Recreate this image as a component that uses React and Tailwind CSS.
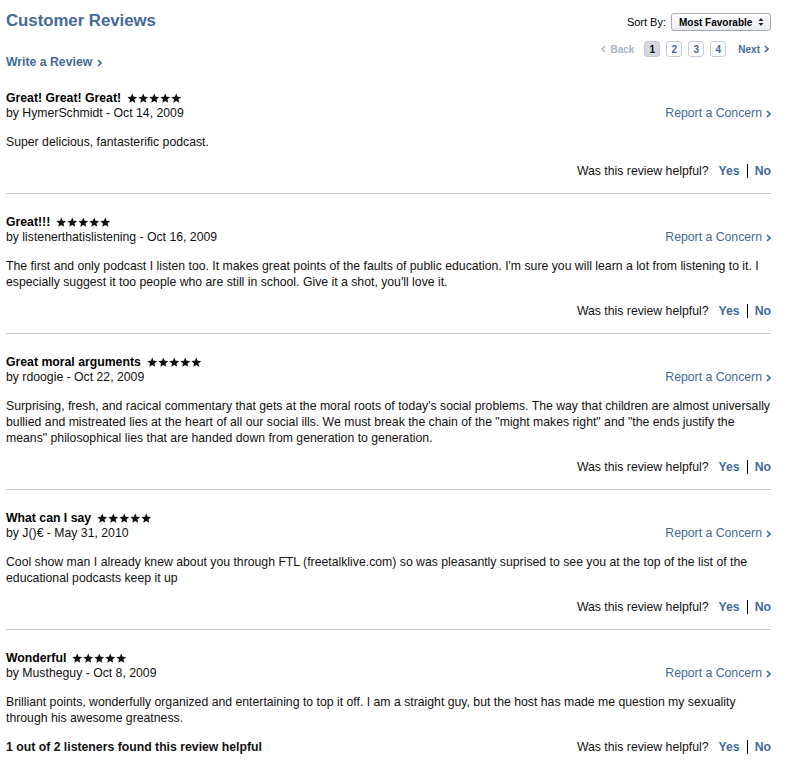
import React from 'react';

const reviews = [
  {
    title: 'Great! Great! Great!',
    by: 'by HymerSchmidt - Oct 14, 2009',
    body: ['Super delicious, fantasterific podcast.'],
  },
  {
    title: 'Great!!!',
    by: 'by listenerthatislistening - Oct 16, 2009',
    body: [
      "The first and only podcast I listen too. It makes great points of the faults of public education. I'm sure you will learn a lot from listening to it. I",
      "especially suggest it too people who are still in school. Give it a shot, you'll love it.",
    ],
  },
  {
    title: 'Great moral arguments',
    by: 'by rdoogie - Oct 22, 2009',
    body: [
      "Surprising, fresh, and racical commentary that gets at the moral roots of today's social problems. The way that children are almost universally",
      'bullied and mistreated lies at the heart of all our social ills. We must break the chain of the "might makes right" and "the ends justify the',
      'means" philosophical lies that are handed down from generation to generation.',
    ],
  },
  {
    title: 'What can I say',
    by: 'by J()€ - May 31, 2010',
    body: [
      'Cool show man I already knew about you through FTL (freetalklive.com) so was pleasantly suprised to see you at the top of the list of the',
      'educational podcasts keep it up',
    ],
  },
  {
    title: 'Wonderful',
    by: 'by Mustheguy - Oct 8, 2009',
    body: [
      'Brilliant points, wonderfully organized and entertaining to top it off. I am a straight guy, but the host has made me question my sexuality',
      'through his awesome greatness.',
    ],
    note: '1 out of 2 listeners found this review helpful',
  },
];

function Chevron({ className }) {
  return (
    <svg width="5" height="8" viewBox="0 0 5 8" className={className}>
      <path d="M1 1 L4 4 L1 7" fill="none" stroke="currentColor" strokeWidth="1.6" />
    </svg>
  );
}

function Stars() {
  return (
    <span className="ml-[6px] inline-flex gap-[0.5px]">
      {[0, 1, 2, 3, 4].map((i) => (
        <svg key={i} width="10.5" height="10.5" viewBox="0 0 24 24">
          <path d="M12 1.2l3.1 7.5 8.1.6-6.2 5.3 1.9 7.9L12 18.3l-6.9 4.2 1.9-7.9L.8 9.3l8.1-.6z" fill="#111" />
        </svg>
      ))}
    </span>
  );
}

function Review({ r, last }) {
  return (
    <div className={last ? '' : 'border-b border-[#c8c8c8] pb-[14px] mb-[21px]'}>
      <div className="flex items-center h-[15px] font-bold text-black">
        {r.title}
        <Stars />
      </div>
      <div className="flex justify-between items-center h-[15px]">
        <span>{r.by}</span>
        <a href="#" className="flex items-center gap-[4px] text-[#44699a]">
          Report a Concern <Chevron />
        </a>
      </div>
      <div className="mt-[13px] leading-[16px]">
        {r.body.map((l, i) => (
          <div key={i} className="whitespace-nowrap">{l}</div>
        ))}
      </div>
      <div className="mt-[13px] flex justify-between items-center h-[16px]">
        <span className="font-bold">{r.note}</span>
        <div className="flex items-center">
          <span>Was this review helpful?</span>
          <a href="#" className="ml-[10px] font-bold text-[#44699a]">Yes</a>
          <span className="mx-[7px] w-px h-[14px] bg-black" />
          <a href="#" className="font-bold text-[#44699a]">No</a>
        </div>
      </div>
    </div>
  );
}

export default function App() {
  return (
    <div
      className="w-[785px] h-[763px] bg-white text-[12.25px] text-[#111] pl-[6px] pr-[14px] overflow-hidden"
      style={{ fontFamily: '"Liberation Sans", Arial, sans-serif' }}
    >
      <div className="flex justify-between">
        <div className="pt-[10px]">
          <h1 className="text-[16.75px] leading-[22px] font-bold text-[#44699a]">Customer Reviews</h1>
          <a href="#" className="mt-[23px] flex items-center gap-[5px] h-[15px] font-bold text-[#44699a]">
            Write a Review <Chevron />
          </a>
        </div>
        <div className="pt-[13px] flex flex-col items-end">
          <div className="flex items-center gap-[5px] h-[18px]">
            <span className="text-[11px] text-black">Sort By:</span>
            <div className="w-[100px] h-[18px] rounded-[3px] border border-[#a3a9b3] bg-gradient-to-b from-white to-[#e8eaee] flex items-center justify-between pl-[7px] pr-[6px] text-[10px] font-bold text-black">
              <span>Most Favorable</span>
              <svg width="6" height="10" viewBox="0 0 6 10">
                <path d="M0.5 4 L3 1 L5.5 4 Z M0.5 6 L3 9 L5.5 6 Z" fill="#222" />
              </svg>
            </div>
          </div>
          <div className="mt-[10px] mr-[2px] flex items-center h-[16px] text-[10px] font-bold">
            <span className="flex items-center gap-[4px] text-[#a8b6c9] mr-[10px]">
              <svg width="5" height="8" viewBox="0 0 5 8">
                <path d="M4 1 L1 4 L4 7" fill="none" stroke="currentColor" strokeWidth="1.5" />
              </svg>
              Back
            </span>
            <span className="w-[16px] h-[16px] rounded-[3px] bg-[#d5d9df] border border-[#c5cad2] text-black flex items-center justify-center">1</span>
            {['2', '3', '4'].map((n) => (
              <span key={n} className="ml-[6px] w-[16px] h-[16px] rounded-[3px] border border-[#c3cddb] text-[#44699a] flex items-center justify-center">
                {n}
              </span>
            ))}
            <a href="#" className="ml-[12px] flex items-center gap-[4px] text-[#44699a]">
              Next <Chevron />
            </a>
          </div>
        </div>
      </div>
      <div className="mt-[21px]">
        {reviews.map((r, i) => (
          <Review key={i} r={r} last={i === reviews.length - 1} />
        ))}
      </div>
    </div>
  );
}
